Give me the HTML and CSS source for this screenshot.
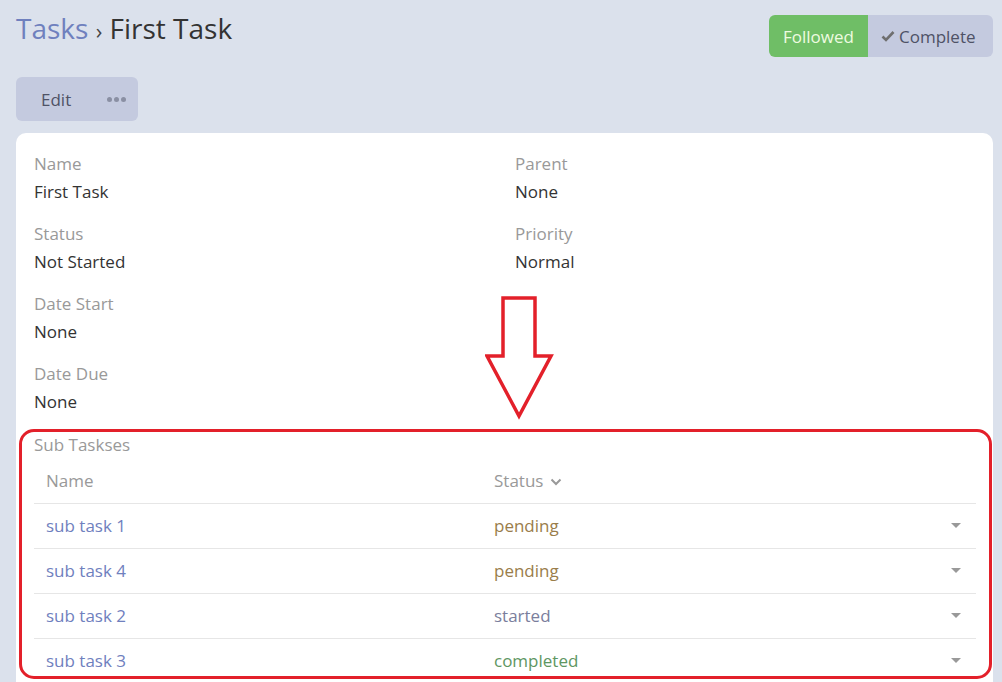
FILE: index.html
```html
<!DOCTYPE html>
<html>
<head>
<meta charset="utf-8">
<link rel="stylesheet" href="styles.css">
</head>
<body>
<div class="page">
  <header class="top">
    <h1 class="title"><a class="crumb">Tasks</a> <span class="sep">›</span> First Task</h1>
    <div class="btn-group">
      <button class="btn btn-followed">Followed</button>
      <button class="btn btn-complete"><svg class="check" viewBox="0 0 14 12" width="14" height="12"><path d="M1.5 6.5 L5 10 L12.5 2" fill="none" stroke="#6f6f6f" stroke-width="2.6"/></svg>Complete</button>
    </div>
  </header>
  <div class="actions">
    <button class="btn-edit"><span>Edit</span><span class="dots"><i></i><i></i><i></i></span></button>
  </div>
  <section class="card">
    <div class="fields">
      <div class="field"><div class="label">Name</div><div class="value">First Task</div></div>
      <div class="field"><div class="label">Parent</div><div class="value">None</div></div>
      <div class="field"><div class="label">Status</div><div class="value">Not Started</div></div>
      <div class="field"><div class="label">Priority</div><div class="value">Normal</div></div>
      <div class="field"><div class="label">Date Start</div><div class="value">None</div></div>
      <div class="field"></div>
      <div class="field"><div class="label">Date Due</div><div class="value">None</div></div>
      <div class="field"></div>
    </div>
    <div class="sub">
      <div class="label">Sub Taskses</div>
      <table class="subtable">
        <thead>
          <tr><th class="c-name">Name</th><th class="c-status">Status <svg class="chev" viewBox="0 0 12 8" width="12" height="8"><path d="M1.5 1.5 L6 6 L10.5 1.5" fill="none" stroke="#999" stroke-width="2"/></svg></th><th class="c-act"></th></tr>
        </thead>
        <tbody>
          <tr><td class="c-name"><a>sub task 1</a></td><td class="c-status s-pending">pending</td><td class="c-act"><span class="caret"></span></td></tr>
          <tr><td class="c-name"><a>sub task 4</a></td><td class="c-status s-pending">pending</td><td class="c-act"><span class="caret"></span></td></tr>
          <tr><td class="c-name"><a>sub task 2</a></td><td class="c-status s-started">started</td><td class="c-act"><span class="caret"></span></td></tr>
          <tr><td class="c-name"><a>sub task 3</a></td><td class="c-status s-completed">completed</td><td class="c-act"><span class="caret"></span></td></tr>
        </tbody>
      </table>
    </div>
  </section>
</div>
<div class="highlight"></div>
<svg class="arrow" width="80" height="130" viewBox="0 0 80 130">
  <polygon points="18,2 50,2 50,60 66,60 34,120 2,60 18,60" fill="none" stroke="#e3202a" stroke-width="3.5" stroke-linejoin="miter"/>
</svg>
</body>
</html>
```

FILE: styles.css
```css
* { box-sizing: border-box; }
html, body { margin: 0; padding: 0; }
body {
  background: #dbe1ec;
  font-family: "Open Sans", "Noto Sans", sans-serif;
  font-size: 17px;
  color: #333;
  width: 1002px;
  height: 682px;
  overflow: hidden;
  position: relative;
}
.page { padding: 8px 9px 0 16px; }
.top { display: flex; justify-content: space-between; align-items: flex-start; }
.title {
  margin: 0;
  font-weight: 400;
  font-size: 28px;
  line-height: 40px;
  color: #333;
}
.crumb { color: #6f80be; }
.sep { font-size: 22px; color: #444; }
.btn-group { display: flex; margin-top: 7px; }
.btn {
  border: none;
  font-family: inherit;
  font-size: 17px;
  height: 42px;
  padding: 0 13px;
  display: flex;
  align-items: center;
}
.btn-followed {
  background: #6fbe66;
  color: #eefbe0;
  border-radius: 6px 0 0 6px;
  width: 99px;
  justify-content: center;
}
.btn-complete {
  background: #c4cadf;
  color: #4f5266;
  border-radius: 0 6px 6px 0;
  width: 125px;
  gap: 4px;
  padding-left: 13px;
}
.actions { margin-top: 20px; }
.btn-edit {
  border: none;
  background: #c4cadf;
  border-radius: 6px;
  height: 44px;
  width: 122px;
  font-family: inherit;
  font-size: 17px;
  color: #4f5266;
  display: flex;
  align-items: center;
  padding: 0 0 0 25px;
  gap: 36px;
}
.dots { display: flex; gap: 2px; }
.dots i { width: 5px; height: 5px; border-radius: 50%; background: #8a8fa3; display: block; }
.card {
  background: #fff;
  border-radius: 10px;
  margin-top: 12px;
  padding: 20px 17px 20px 18px;
}
.fields {
  display: grid;
  grid-template-columns: 481px 1fr;
  row-gap: 14px;
}
.field { min-height: 56px; }
.label { color: #999; line-height: 22px; }
.value { color: #333; line-height: 34px; }
.sub { margin-top: 15px; }
.subtable {
  width: 100%;
  border-collapse: collapse;
  margin-top: 3px;
}
.subtable th, .subtable td {
  text-align: left;
  font-weight: 400;
  padding: 0 12px;
  height: 45px;
  font-size: 17px;
}
.subtable th { color: #999; height: 44px; border-bottom: 1px solid #e6e6e6; }
.subtable td { border-bottom: 1px solid #e6e6e6; }
.subtable .c-name { width: 448px; }
.subtable .c-act { width: 60px; text-align: right; padding-right: 15px; }
.subtable a { color: #6f80be; }
.s-pending { color: #9a7d4a; }
.s-started { color: #7a7e9c; }
.s-completed { color: #5e9662; }
.chev { margin-left: 2px; vertical-align: 1px; }
.caret {
  display: inline-block;
  width: 0; height: 0;
  border-left: 5px solid transparent;
  border-right: 5px solid transparent;
  border-top: 5px solid #999;
  vertical-align: 4px;
}
.highlight {
  position: absolute;
  left: 19px; top: 429px;
  width: 973px; height: 250px;
  border: 3.5px solid #e3202a;
  border-radius: 15px;
  pointer-events: none;
}
.arrow {
  position: absolute;
  left: 485px; top: 296px;
  pointer-events: none;
}
```
